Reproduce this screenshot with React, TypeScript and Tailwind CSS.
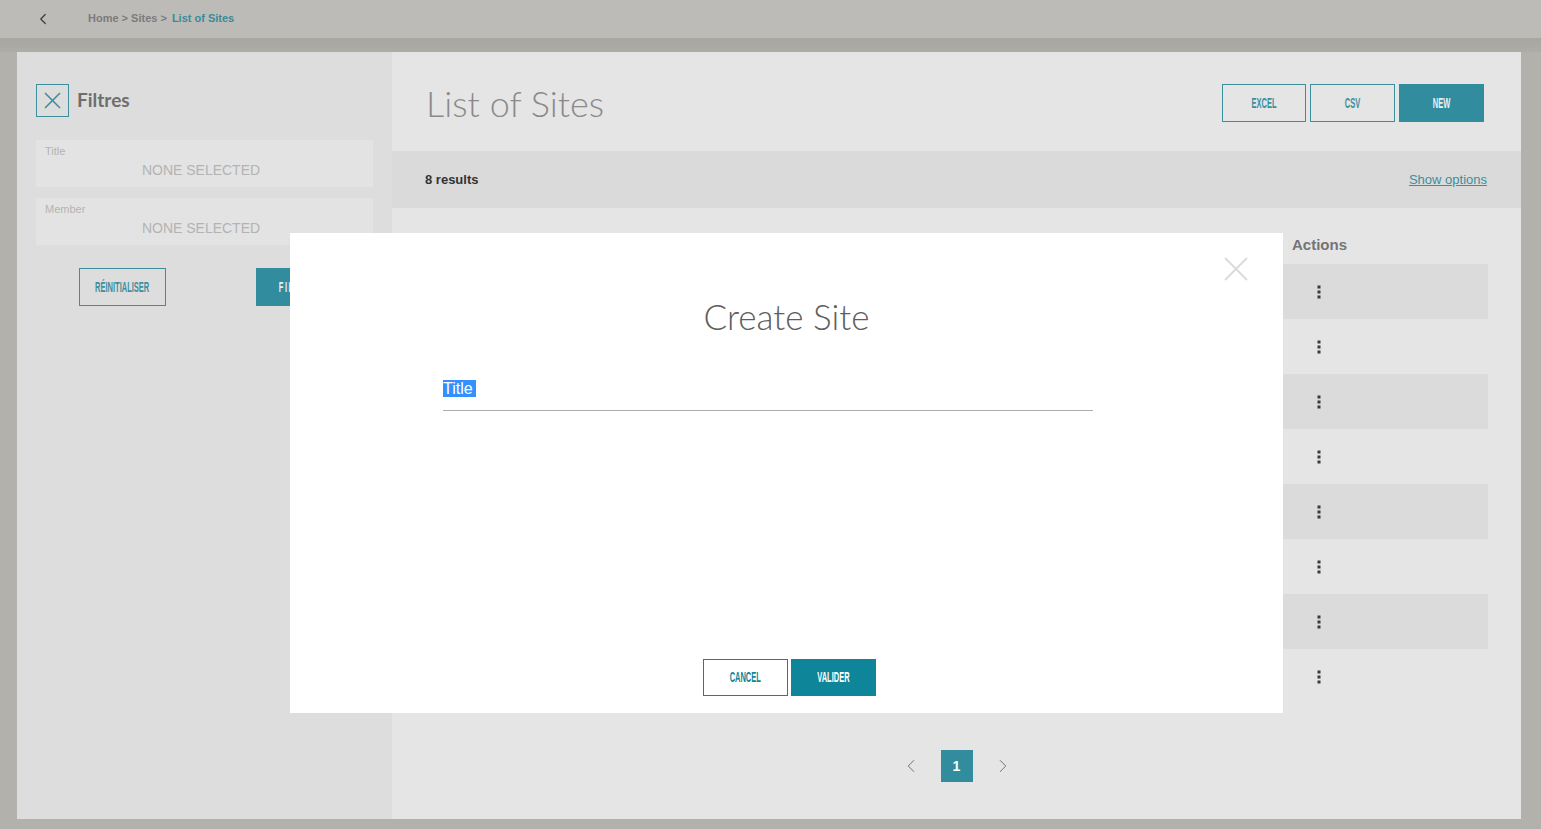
import { ChevronLeft, ChevronRight } from "lucide-react";

const ROWS = [0, 1, 2, 3, 4, 5, 6, 7];

const condensed = "font-['Liberation_Sans',Arial,sans-serif] inline-block scale-x-[0.5] font-bold uppercase";

function Dots() {
  return (
    <svg width="4" height="14" viewBox="0 0 4 14" className="block">
      <rect x="0.5" y="0.5" width="3" height="3" fill="#3a3a3a" />
      <rect x="0.5" y="5.5" width="3" height="3" fill="#3a3a3a" />
      <rect x="0.5" y="10.5" width="3" height="3" fill="#3a3a3a" />
    </svg>
  );
}

function Cross({ size, stroke, width }: { size: number; stroke: string; width: number }) {
  return (
    <svg width={size} height={size} viewBox={`0 0 ${size} ${size}`} className="block">
      <line x1="1" y1="1" x2={size - 1} y2={size - 1} stroke={stroke} strokeWidth={width} />
      <line x1={size - 1} y1="1" x2="1" y2={size - 1} stroke={stroke} strokeWidth={width} />
    </svg>
  );
}

function FilterField({ label }: { label: string }) {
  return (
    <div className="h-[47px] bg-[#e3e3e3] pl-[9px] pr-[16px] pt-[5px]">
      <div className="text-[11px] leading-[13px] text-[#b4b4b4]">{label}</div>
      <div className="mt-[4px] text-center text-[14px] leading-[17px] text-[#b3b3b3]">NONE SELECTED</div>
    </div>
  );
}

function CreateSiteModal() {
  return (
    <div className="absolute left-[290px] top-[233px] flex h-[480px] w-[993px] flex-col bg-white">
      <button className="absolute right-[35px] top-[24px]">
        <Cross size={24} stroke="#dadada" width={1.8} />
      </button>
      <h2 className="mt-[60px] text-center font-['Lato',sans-serif] text-[35px] font-light leading-[46px] text-[#5e5e5e]">
        Create Site
      </h2>
      <div className="ml-[153px] mt-[38px] w-[650px] border-b border-[#acacac] pb-[9px]">
        <span className="bg-[#3390ff] pr-[3px] text-[16px] leading-[18px] text-white">Title</span>
      </div>
      <div className="flex-1" />
      <div className="mb-[17px] flex justify-center gap-[3px] pl-[6px]">
        <button className="flex h-[37px] w-[85px] items-center justify-center border border-[#0e8599] bg-white text-[15px] text-[#0e8599]">
          <span className={condensed}>Cancel</span>
        </button>
        <button className="flex h-[37px] w-[85px] items-center justify-center bg-[#0e8599] text-[15px] text-white">
          <span className={condensed}>Valider</span>
        </button>
      </div>
    </div>
  );
}

export default function App() {
  return (
    <div className="relative h-[829px] w-full overflow-hidden bg-[#b2b1ac] font-['Liberation_Sans',Arial,sans-serif]">
      <header className="flex h-[38px] items-center bg-[#bdbbb7] pl-[34px]">
        <ChevronLeft size={18} strokeWidth={1.6} className="-mt-[1px] text-[#3c3c3c]" />
        <nav className="-mt-[1px] ml-[36px] flex gap-[5px] text-[11px] font-bold">
          <span className="text-[#7b7b7b]">Home &gt; Sites &gt;</span>
          <span className="text-[#3b8b99]">List of Sites</span>
        </nav>
      </header>

      <div className="h-[14px] bg-gradient-to-b from-[#a7a6a1] to-[#adaca7]" />

      <main className="ml-[17px] mr-[20px] flex h-[767px]">
        <aside className="w-[375px] bg-[#dddddd] px-[19px] pt-[32px]">
          <div className="flex items-center gap-[8px]">
            <button className="flex h-[33px] w-[33px] items-center justify-center border border-[#3c8f9d]">
              <Cross size={17} stroke="#3c8f9d" width={1.6} />
            </button>
            <h3 className="font-['Lato',sans-serif] text-[19px] font-bold text-[#6e6e6e]">Filtres</h3>
          </div>
          <div className="mt-[23px] flex flex-col gap-[11px]">
            <FilterField label="Title" />
            <FilterField label="Member" />
          </div>
          <div className="mt-[23px] flex gap-[90px] pl-[43px]">
            <button className="flex h-[38px] w-[87px] items-center justify-center border border-[#3c8f9d] text-[15px] text-[#3c8f9d]">
              <span className={condensed}>Réinitialiser</span>
            </button>
            <button className="flex h-[38px] w-[87px] items-center justify-center bg-[#318d9e] text-[15px] tracking-[3px] text-[#e6f1f3]">
              <span className={condensed}>Filtrer</span>
            </button>
          </div>
        </aside>

        <section className="flex flex-1 flex-col bg-[#e5e5e5]">
          <div className="flex h-[99px] items-start justify-between pl-[34px] pr-[37px]">
            <h1 className="mt-[28px] font-['Lato',sans-serif] text-[36px] font-light leading-[46px] text-[#8a8a8a]">
              List of Sites
            </h1>
            <div className="mt-[32px] flex gap-[4px]">
              <button className="flex h-[38px] w-[84px] items-center justify-center border border-[#3c8f9d] text-[15px] text-[#3c8f9d]">
                <span className={condensed}>Excel</span>
              </button>
              <button className="flex h-[38px] w-[85px] items-center justify-center border border-[#3c8f9d] text-[15px] text-[#3c8f9d]">
                <span className={condensed}>CSV</span>
              </button>
              <button className="flex h-[38px] w-[85px] items-start justify-center bg-[#318d9e] pt-[8px] text-[15px] text-[#e6f1f3]">
                <span className={condensed}>New</span>
              </button>
            </div>
          </div>

          <div className="flex h-[57px] items-center justify-between bg-[#dadada] pl-[33px] pr-[34px] text-[13px]">
            <span className="font-bold text-[#333333]">8 results</span>
            <a className="text-[#3c8f9d] underline">Show options</a>
          </div>

          <div className="px-[33px]">
            <div className="flex h-[56px] items-end justify-end pb-[8px]">
              <span className="w-[196px] text-[15px] font-bold text-[#747474]">Actions</span>
            </div>
            {ROWS.map((r) => (
              <div
                key={r}
                className={`flex h-[55px] items-center justify-end ${r % 2 === 0 ? "bg-[#dbdbdb]" : ""}`}
              >
                <div className="w-[196px] pl-[25px]">
                  <Dots />
                </div>
              </div>
            ))}
          </div>

          <div className="mt-[46px] flex items-center justify-center gap-[19px]">
            <ChevronLeft size={22} strokeWidth={1} className="text-[#666666]" />
            <span className="flex h-[32px] w-[32px] items-center justify-center bg-[#318d9e] text-[14px] font-bold text-white">
              1
            </span>
            <ChevronRight size={22} strokeWidth={1} className="text-[#666666]" />
          </div>
        </section>
      </main>

      <CreateSiteModal />
    </div>
  );
}
